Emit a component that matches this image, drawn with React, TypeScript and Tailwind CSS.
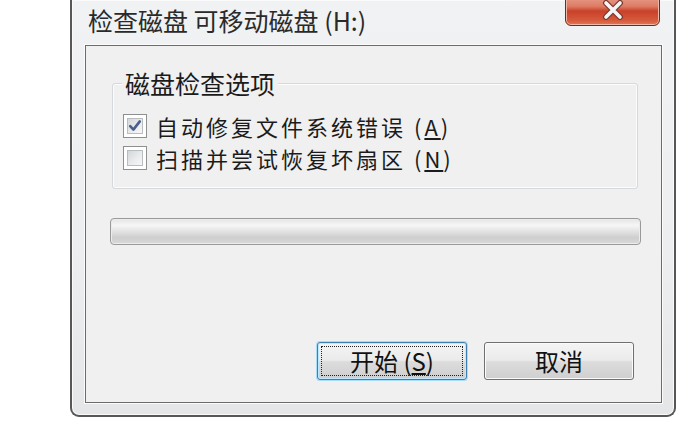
import React from 'react';

// Windows 7 style "Check Disk" dialog

const FONT = "font-['Noto_Sans_CJK_SC','Noto_Sans',sans-serif]";

const CheckBox: React.FC<{ checked?: boolean }> = ({ checked }) => (
    <div className="w-[24px] h-[24px] shrink-0 border border-[#8e8f8f] bg-white p-[3px]">
        <div className="w-full h-full border border-[#b9bcc0] bg-[linear-gradient(135deg,#d4d6d9_0%,#eceded_60%,#f7f7f7_100%)] flex items-center justify-center">
            {checked && (
                <svg width="14" height="14" viewBox="0 0 14 14">
                    <path d="M2.2 7.2 L5.4 10.6 L11.8 2.4" fill="none" stroke="#4a5f8f" strokeWidth="2.6" strokeLinecap="round" strokeLinejoin="round" />
                </svg>
            )}
        </div>
    </div>
);

const OptionRow: React.FC<{ checked?: boolean; children: React.ReactNode }> = ({ checked, children }) => (
    <div className="h-[32px] flex items-center gap-[9px] ml-[10px]">
        <CheckBox checked={checked} />
        <div className="text-[22px] leading-[30px] tracking-[3px] text-[#1b1b1b] whitespace-nowrap">{children}</div>
    </div>
);

const DialogButton: React.FC<{ primary?: boolean; children: React.ReactNode }> = ({ primary, children }) => (
    <div
        className={`w-[150px] h-[38px] rounded-[3px] border p-[3px] bg-[linear-gradient(to_bottom,#f4f4f4_0%,#ebebeb_48%,#dcdcdc_52%,#cfcfcf_100%)] ${
            primary
                ? 'border-[#3c7fb1] shadow-[0_0_0_1px_#a8dbf5,inset_0_0_0_1px_#bfe6fa]'
                : 'border-[#707070] shadow-[inset_0_0_0_1px_#fbfbfb]'
        }`}
    >
        <div className={`w-full h-full flex items-center justify-center text-[24px] leading-none text-[#111] ${primary ? 'border border-dotted border-[#222]' : ''}`}>
            {children}
        </div>
    </div>
);

export default function App() {
    return (
        <div className={`w-[694px] h-[425px] bg-white overflow-hidden pl-[70px] ${FONT}`}>
            {/* window frame */}
            <div className="w-[606px] h-[417px] flex flex-col border-x-2 border-b-2 border-[#575757] rounded-b-[9px] bg-[linear-gradient(to_bottom,#f1f2f3_0%,#eceef0_60%,#e4e6e8_100%)] shadow-[inset_0_0_0_1px_#fafafa] pl-[13px] pr-[12px] pb-[12px]">
                {/* title bar */}
                <div className="h-[45px] shrink-0 flex items-start justify-between">
                    <div className="pl-[3px] pt-[6px] text-[25px] leading-[28px] text-[#2a2a2a] whitespace-nowrap">
                        检查磁盘 可移动磁盘 (H:)
                    </div>
                    <div className="-mt-[7px] mr-[2px] w-[95px] h-[33px] rounded-b-[6px] border border-[#6e2c1f] bg-[linear-gradient(to_bottom,#e9a899_0%,#de7a63_40%,#c8412a_55%,#d65a3c_85%,#e07a55_100%)] shadow-[inset_0_0_0_1px_#f0b8a8] flex items-center justify-center">
                        <svg width="26" height="20" viewBox="0 0 26 20">
                            <path d="M6 3 L20 17 M20 3 L6 17" stroke="#7a3a30" strokeWidth="6" strokeLinecap="round" />
                            <path d="M6 3 L20 17 M20 3 L6 17" stroke="#f4f7f6" strokeWidth="3.6" strokeLinecap="round" />
                        </svg>
                    </div>
                </div>

                {/* client area */}
                <div className="flex-1 border border-[#6c6c6c] bg-[#f0f0f0] shadow-[0_0_0_1px_#fbfbfb]">
                    {/* group box */}
                    <div className="ml-[26px] mt-[37px] w-[526px] h-[106px] border border-[#d5d9dc] rounded-[3px] shadow-[inset_0_0_0_1px_#fcfcfc]">
                        <div className="-mt-[15px] ml-[9px] w-fit px-[3px] bg-[#f0f0f0] text-[25px] leading-[28px] text-[#1b1b1b]">
                            磁盘检查选项
                        </div>
                        <div className="mt-[13px]">
                            <OptionRow checked>
                                自动修复文件系统错误 (<u>A</u>)
                            </OptionRow>
                            <OptionRow>
                                扫描并尝试恢复坏扇区 (<u>N</u>)
                            </OptionRow>
                        </div>
                    </div>

                    {/* progress bar */}
                    <div className="ml-[24px] mt-[29px] w-[531px] h-[27px] rounded-[4px] border border-[#9a9a9a] bg-[linear-gradient(to_bottom,#e4e4e4_0%,#f6f6f6_25%,#e2e2e2_50%,#cecece_75%,#dadada_100%)] shadow-[inset_0_0_0_1px_#ececec]" />

                    {/* buttons */}
                    <div className="mt-[97px] pr-[27px] flex justify-end gap-[17px]">
                        <DialogButton primary>
                            开始 (<u>S</u>)
                        </DialogButton>
                        <DialogButton>取消</DialogButton>
                    </div>
                </div>
            </div>
        </div>
    );
}
